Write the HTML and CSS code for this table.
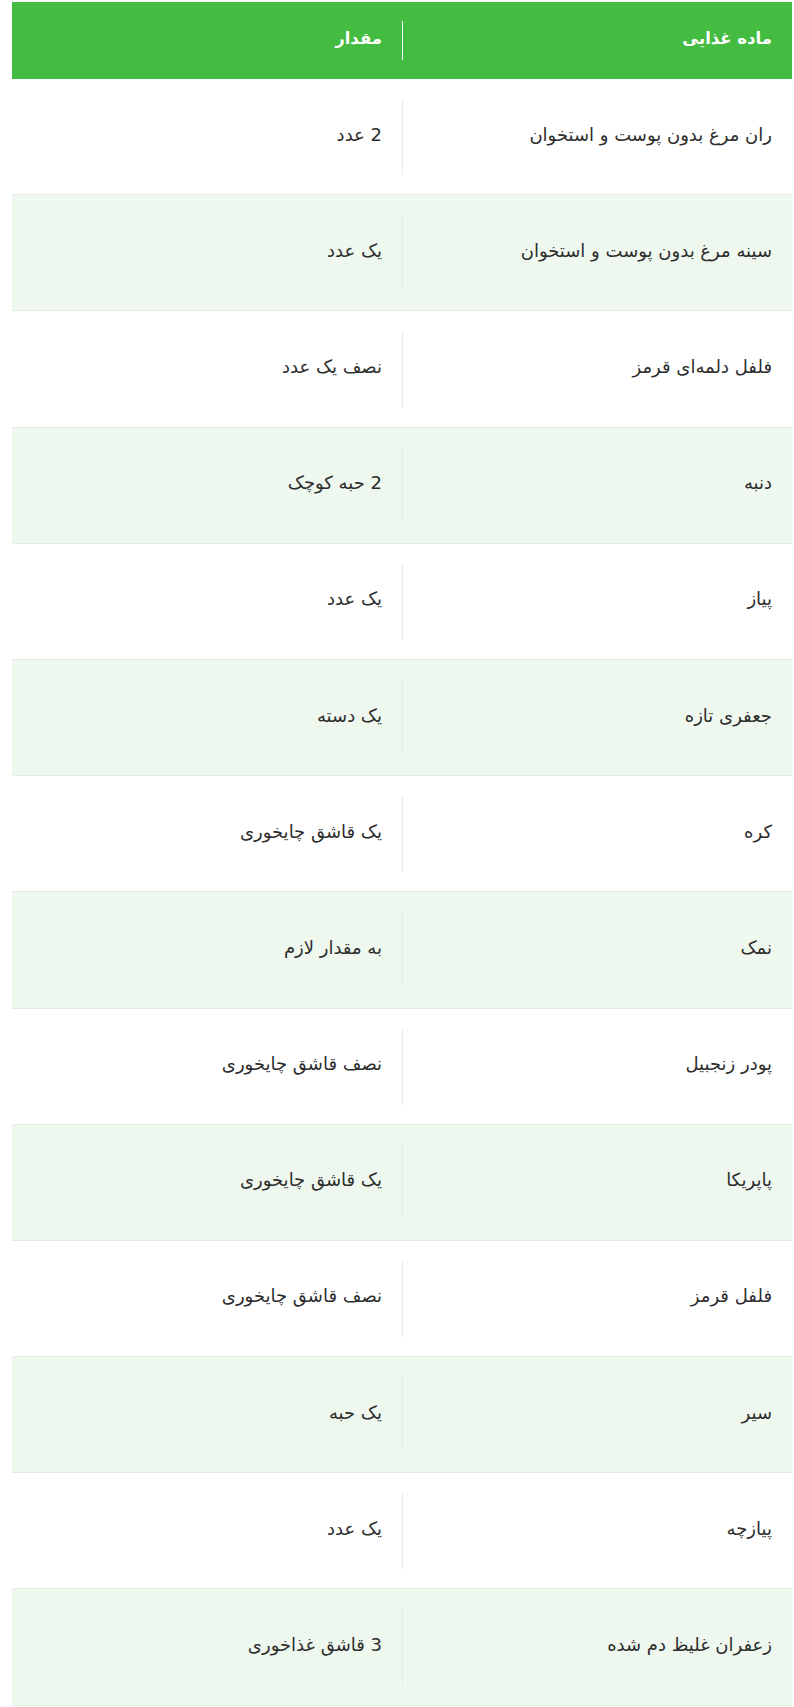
FILE: index.html
```html
<!DOCTYPE html>
<html lang="fa" dir="rtl">
<head>
<meta charset="utf-8">
<title>مواد لازم</title>
<link rel="stylesheet" href="styles.css">
</head>
<body>
<div class="table">
  <div class="row head">
    <div class="cell"><div class="in">ماده غذایی</div></div>
    <div class="cell"><div class="in">مقدار</div></div>
  </div>
  <div class="row"><div class="cell"><div class="in">ران مرغ بدون پوست و استخوان</div></div><div class="cell"><div class="in">2 عدد</div></div></div>
  <div class="row alt"><div class="cell"><div class="in">سینه مرغ بدون پوست و استخوان</div></div><div class="cell"><div class="in">یک عدد</div></div></div>
  <div class="row"><div class="cell"><div class="in">فلفل دلمه‌ای قرمز</div></div><div class="cell"><div class="in">نصف یک عدد</div></div></div>
  <div class="row alt"><div class="cell"><div class="in">دنبه</div></div><div class="cell"><div class="in">2 حبه کوچک</div></div></div>
  <div class="row"><div class="cell"><div class="in">پیاز</div></div><div class="cell"><div class="in">یک عدد</div></div></div>
  <div class="row alt"><div class="cell"><div class="in">جعفری تازه</div></div><div class="cell"><div class="in">یک دسته</div></div></div>
  <div class="row"><div class="cell"><div class="in">کره</div></div><div class="cell"><div class="in">یک قاشق چایخوری</div></div></div>
  <div class="row alt"><div class="cell"><div class="in">نمک</div></div><div class="cell"><div class="in">به مقدار لازم</div></div></div>
  <div class="row"><div class="cell"><div class="in">پودر زنجبیل</div></div><div class="cell"><div class="in">نصف قاشق چایخوری</div></div></div>
  <div class="row alt"><div class="cell"><div class="in">پاپریکا</div></div><div class="cell"><div class="in">یک قاشق چایخوری</div></div></div>
  <div class="row"><div class="cell"><div class="in">فلفل قرمز</div></div><div class="cell"><div class="in">نصف قاشق چایخوری</div></div></div>
  <div class="row alt"><div class="cell"><div class="in">سیر</div></div><div class="cell"><div class="in">یک حبه</div></div></div>
  <div class="row"><div class="cell"><div class="in">پیازچه</div></div><div class="cell"><div class="in">یک عدد</div></div></div>
  <div class="row alt"><div class="cell"><div class="in">زعفران غلیظ دم شده</div></div><div class="cell"><div class="in">3 قاشق غذاخوری</div></div></div>
</div>
</body>
</html>
```
FILE: styles.css
```css
html, body {
  margin: 0;
  padding: 0;
  background: #ffffff;
}
body {
  font-family: "DejaVu Sans", "Noto Sans", sans-serif;
  color: #2d2d2d;
  padding: 2px 2px 0 12px;
}
.table {
  display: flex;
  flex-direction: column;
  width: 780px;
}
.row {
  display: grid;
  grid-template-columns: 1fr 1fr;
  border-bottom: 1px solid #e6ebe6;
  background: #ffffff;
}
.row.alt {
  background: #eff8ef;
}
.cell {
  padding: 20px 20px 19px 20px;
  display: flex;
}
.cell .in {
  flex: 1;
  box-sizing: border-box;
  min-height: 76.2px;
  padding-bottom: 5px;
  display: flex;
  align-items: center;
  font-size: 18px;
  line-height: 26px;
}
.cell:first-child .in {
  border-left: 1px solid #e8ece8;
  margin-left: -20px;
  padding-left: 20px;
}
.row.head {
  background: #43bc41;
  border-bottom: none;
}
.row.head .cell {
  padding: 19px 20px;
}
.row.head .in {
  min-height: 39px;
  padding-bottom: 4px;
  color: #ffffff;
  font-weight: bold;
  font-size: 16.5px;
}
.row.head .cell:first-child .in {
  border-left: 1px solid #ffffff;
}
```
